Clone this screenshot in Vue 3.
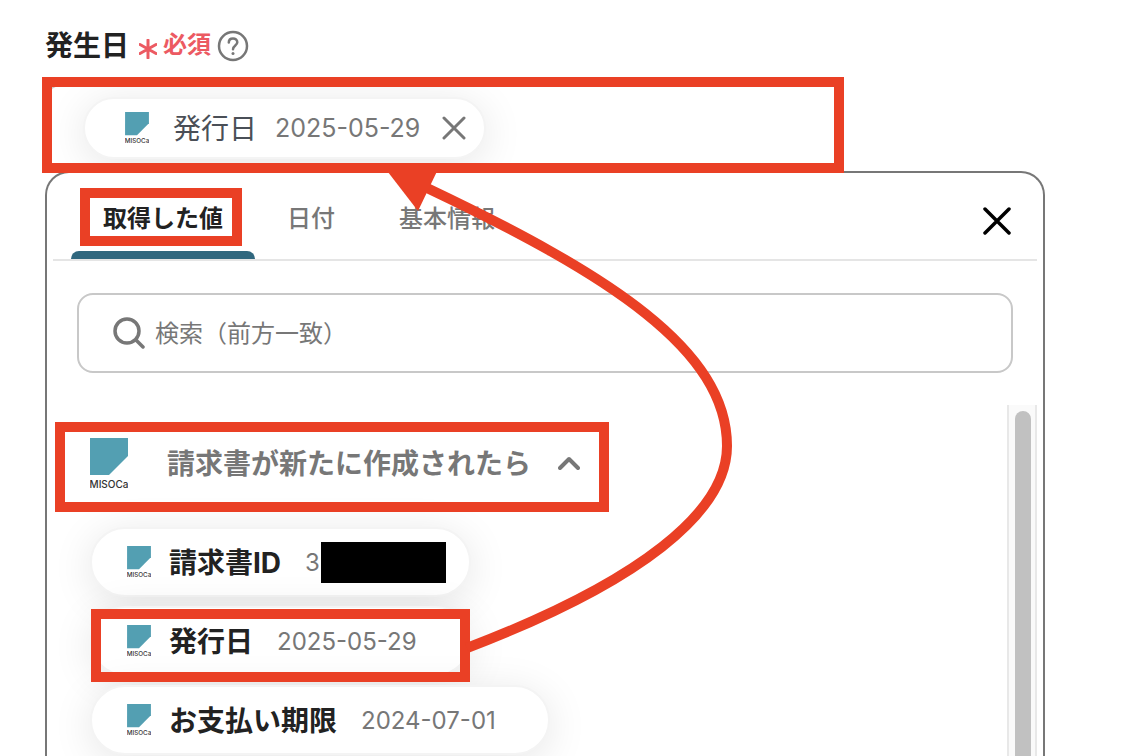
<script setup>
import { ref, h } from 'vue'

const query = ref('')
const activeTab = ref(0)
const tabs = ['取得した値', '日付', '基本情報']
const values = [
  { label: '請求書ID', value: '39', masked: true },
  { label: '発行日', value: '2025-05-29' },
  { label: 'お支払い期限', value: '2024-07-01' }
]

const MisocaLogo = () =>
  h('svg', { viewBox: '0 0 38 51', 'aria-label': 'Misoca', role: 'img' }, [
    h('path', { d: 'M0 0H38V18L19 37H0Z', fill: '#539fb2' }),
    h(
      'text',
      {
        x: 19,
        y: 50,
        'text-anchor': 'middle',
        'font-family': 'Inter, sans-serif',
        'font-size': 10,
        'font-weight': 500,
        fill: '#333'
      },
      'MISOCa'
    )
  ])
</script>

<template>
  <main class="page">
    <div class="field-label">
      <span class="name">発生日</span>
      <svg class="asterisk" viewBox="0 0 18 20" aria-hidden="true">
        <path d="M9 1V19M1 5.5L17 14.5M17 5.5L1 14.5" />
      </svg>
      <span class="required">必須</span>
      <button class="plain help" aria-label="ヘルプ">
        <svg viewBox="0 0 32 32">
          <circle cx="16" cy="16" r="14" />
          <path d="M11.8 12.6C11.8 10 13.6 8.4 16 8.4S20.3 10 20.3 12.3C20.3 15.4 16 15.6 16 19.3" />
          <circle class="dot" cx="16" cy="23.5" r="1.5" />
        </svg>
      </button>
    </div>

    <div class="field">
      <div class="chip selected">
        <MisocaLogo class="logo" />
        <span class="chip-label">発行日</span>
        <span class="chip-value">2025-05-29</span>
        <button class="plain remove" aria-label="削除">
          <svg viewBox="0 0 24 24"><path d="M2 2L22 22M22 2L2 22" /></svg>
        </button>
      </div>
    </div>

    <section class="panel">
      <div class="tabbar">
        <div class="tabs" role="tablist">
          <button
            v-for="(tab, i) in tabs"
            :key="tab"
            class="plain tab"
            role="tab"
            :aria-selected="activeTab === i"
            :class="{ active: activeTab === i }"
            @click="activeTab = i"
          >
            {{ tab }}
          </button>
        </div>
        <button class="plain close" aria-label="閉じる">
          <svg viewBox="0 0 28 28"><path d="M2 2L26 26M26 2L2 26" /></svg>
        </button>
      </div>

      <label class="search">
        <svg viewBox="0 0 32 32" aria-hidden="true">
          <circle cx="14" cy="14" r="12" />
          <path d="M23 23L30 30" />
        </svg>
        <input v-model="query" type="text" aria-label="検索" placeholder="検索（前方一致）" />
      </label>

      <div class="results">
        <div class="list">
          <button class="plain group">
            <MisocaLogo class="group-logo" />
            <span class="group-title">請求書が新たに作成されたら</span>
            <svg class="chevron" viewBox="0 0 22 14"><path d="M2 12L11 3L20 12" /></svg>
          </button>
          <button v-for="item in values" :key="item.label" class="plain chip">
            <MisocaLogo class="logo" />
            <span class="chip-label">{{ item.label }}</span>
            <span class="chip-value" :class="{ masked: item.masked }">{{ item.value }}</span>
          </button>
        </div>
        <div class="track"><div class="thumb"></div></div>
      </div>
    </section>

    <svg class="notes" aria-hidden="true">
      <rect x="47" y="82" width="792" height="86" />
      <rect x="85" y="193" width="152" height="48" />
      <rect x="60" y="427" width="544" height="80" />
      <rect x="96" y="614" width="369" height="63" />
      <path d="M467 648C640 582 727 512 727 446C727 350 610 275 427 188" />
      <polygon points="381,163 441,163 418,211" />
    </svg>
  </main>
</template>

<style>
body {
  background: #fff;
}
</style>

<style scoped>
.page {
  position: relative;
  box-sizing: border-box;
  display: flex;
  flex-direction: column;
  height: 100vh;
  overflow: hidden;
  padding: 24px 92px 0 45px;
  font-family: Inter, "Noto Sans CJK JP", sans-serif;
  color: #222;
}
.plain {
  padding: 0;
  border: 0;
  background: none;
  font: inherit;
  color: inherit;
  text-align: left;
  cursor: pointer;
}
svg {
  display: block;
  flex: none;
  fill: none;
  stroke-linecap: round;
  stroke-linejoin: round;
}
.field-label {
  display: flex;
  align-items: center;
  height: 44px;
}
.name {
  font-size: 28px;
  font-weight: 700;
  line-height: 44px;
}
.asterisk {
  width: 18px;
  height: 20px;
  margin: 6px 6px 0 10px;
  stroke: #ec5a62;
  stroke-width: 3;
}
.required {
  font-size: 24px;
  font-weight: 700;
  line-height: 40px;
  padding-bottom: 2px;
  color: #ec5a62;
}
.help {
  margin-left: 6px;
}
.help svg {
  width: 32px;
  height: 32px;
  stroke: #777;
  stroke-width: 2.5;
}
.help .dot {
  fill: #777;
  stroke: none;
}
.field {
  box-sizing: border-box;
  display: flex;
  align-items: center;
  width: 79%;
  height: 87px;
  margin: 16px 0 0;
  padding-left: 36px;
  border: 2px solid #c8c8c8;
  border-right: 0;
  border-radius: 16px 0 0 16px;
  overflow: hidden;
}
.chip {
  box-sizing: border-box;
  display: flex;
  align-items: center;
  height: 70px;
  padding: 0 52px 0 35px;
  border: 2px solid #f4f4f4;
  border-radius: 35px;
  background: #fff;
  box-shadow: 0 6px 40px rgba(0, 0, 0, 0.1);
  white-space: nowrap;
}
.logo {
  width: 24px;
  height: 32px;
  margin-right: 18px;
}
.chip-label {
  padding-bottom: 2px;
  font-size: 28px;
  font-weight: 700;
}
.chip-value {
  margin-left: 24px;
  font-size: 24px;
  color: #777;
}
.chip.selected {
  height: 62px;
  padding: 0 18px 0 40px;
}
.selected .logo {
  margin-right: 24px;
}
.selected .chip-label {
  font-weight: 400;
  color: #4a4f57;
}
.selected .chip-value {
  margin-left: 18px;
  font-size: 25px;
}
.remove {
  margin-left: 22px;
}
.remove svg {
  width: 24px;
  height: 24px;
  stroke: #777;
  stroke-width: 3;
}
.masked {
  position: relative;
  box-sizing: border-box;
  width: 112px;
}
.masked::after {
  content: "";
  position: absolute;
  top: -6px;
  left: 16px;
  width: 125px;
  height: 41px;
  background: #000;
}
.panel {
  flex: 1;
  display: flex;
  flex-direction: column;
  min-height: 0;
  padding: 0 6px;
  border: 2px solid #777;
  border-bottom: 0;
  border-radius: 24px 24px 0 0;
}
.tabbar {
  display: flex;
  align-items: center;
  justify-content: space-between;
  height: 86px;
  padding: 0 26px 0 18px;
  border-bottom: 2px solid #e5e5e5;
}
.tabs {
  display: flex;
  align-self: stretch;
}
.tab {
  position: relative;
  padding: 0 32px;
  font-size: 24px;
  font-weight: 500;
  color: #777;
}
.tab.active {
  font-weight: 700;
  color: #222;
}
.tab.active::after {
  content: "";
  position: absolute;
  right: 0;
  bottom: 0;
  left: 0;
  height: 8px;
  border-radius: 8px 8px 0 0;
  background: #30677e;
}
.close {
  padding-top: 10px;
}
.close svg {
  width: 28px;
  height: 28px;
  stroke: #000;
  stroke-width: 3.5;
}
.search {
  display: flex;
  align-items: center;
  gap: 10px;
  height: 76px;
  margin: 32px 24px;
  padding-left: 34px;
  border: 2px solid #c8c8c8;
  border-radius: 16px;
}
.search svg {
  width: 32px;
  height: 32px;
  stroke: #777;
  stroke-width: 3.5;
}
.search input {
  flex: 1;
  min-width: 0;
  padding: 0;
  border: 0;
  outline: 0;
  background: none;
  font: inherit;
  font-size: 24px;
  color: #222;
}
.search input::placeholder {
  color: #777;
  opacity: 1;
}
.results {
  flex: 1;
  display: flex;
  min-height: 0;
}
.list {
  flex: 1;
  display: flex;
  flex-direction: column;
  align-items: flex-start;
  gap: 9px;
  overflow: hidden;
  padding: 19px 0 0 37px;
}
.list > * {
  flex: none;
}
.group {
  display: flex;
  align-items: center;
  height: 78px;
  margin-bottom: 16px;
}
.group-logo {
  width: 38px;
  height: 51px;
  margin-right: 39px;
}
.group-title {
  margin-right: 27px;
  padding-bottom: 2px;
  font-size: 28px;
  font-weight: 700;
  color: #777;
}
.chevron {
  width: 22px;
  height: 14px;
  stroke: #777;
  stroke-width: 4;
}
.track {
  box-sizing: border-box;
  width: 30px;
  padding: 6px 4px 0 6px;
  border: solid #e8e8e8;
  border-width: 0 2px;
  background: #fafafa;
}
.thumb {
  height: 100%;
  border-radius: 8px 8px 0 0;
  background: #c1c1c1;
}
.notes {
  position: absolute;
  top: 0;
  left: 0;
  width: 100%;
  height: 100%;
  stroke: #ea4025;
  stroke-width: 10;
  stroke-linecap: butt;
  stroke-linejoin: miter;
  pointer-events: none;
}
.notes polygon {
  fill: #ea4025;
  stroke: none;
}
</style>
